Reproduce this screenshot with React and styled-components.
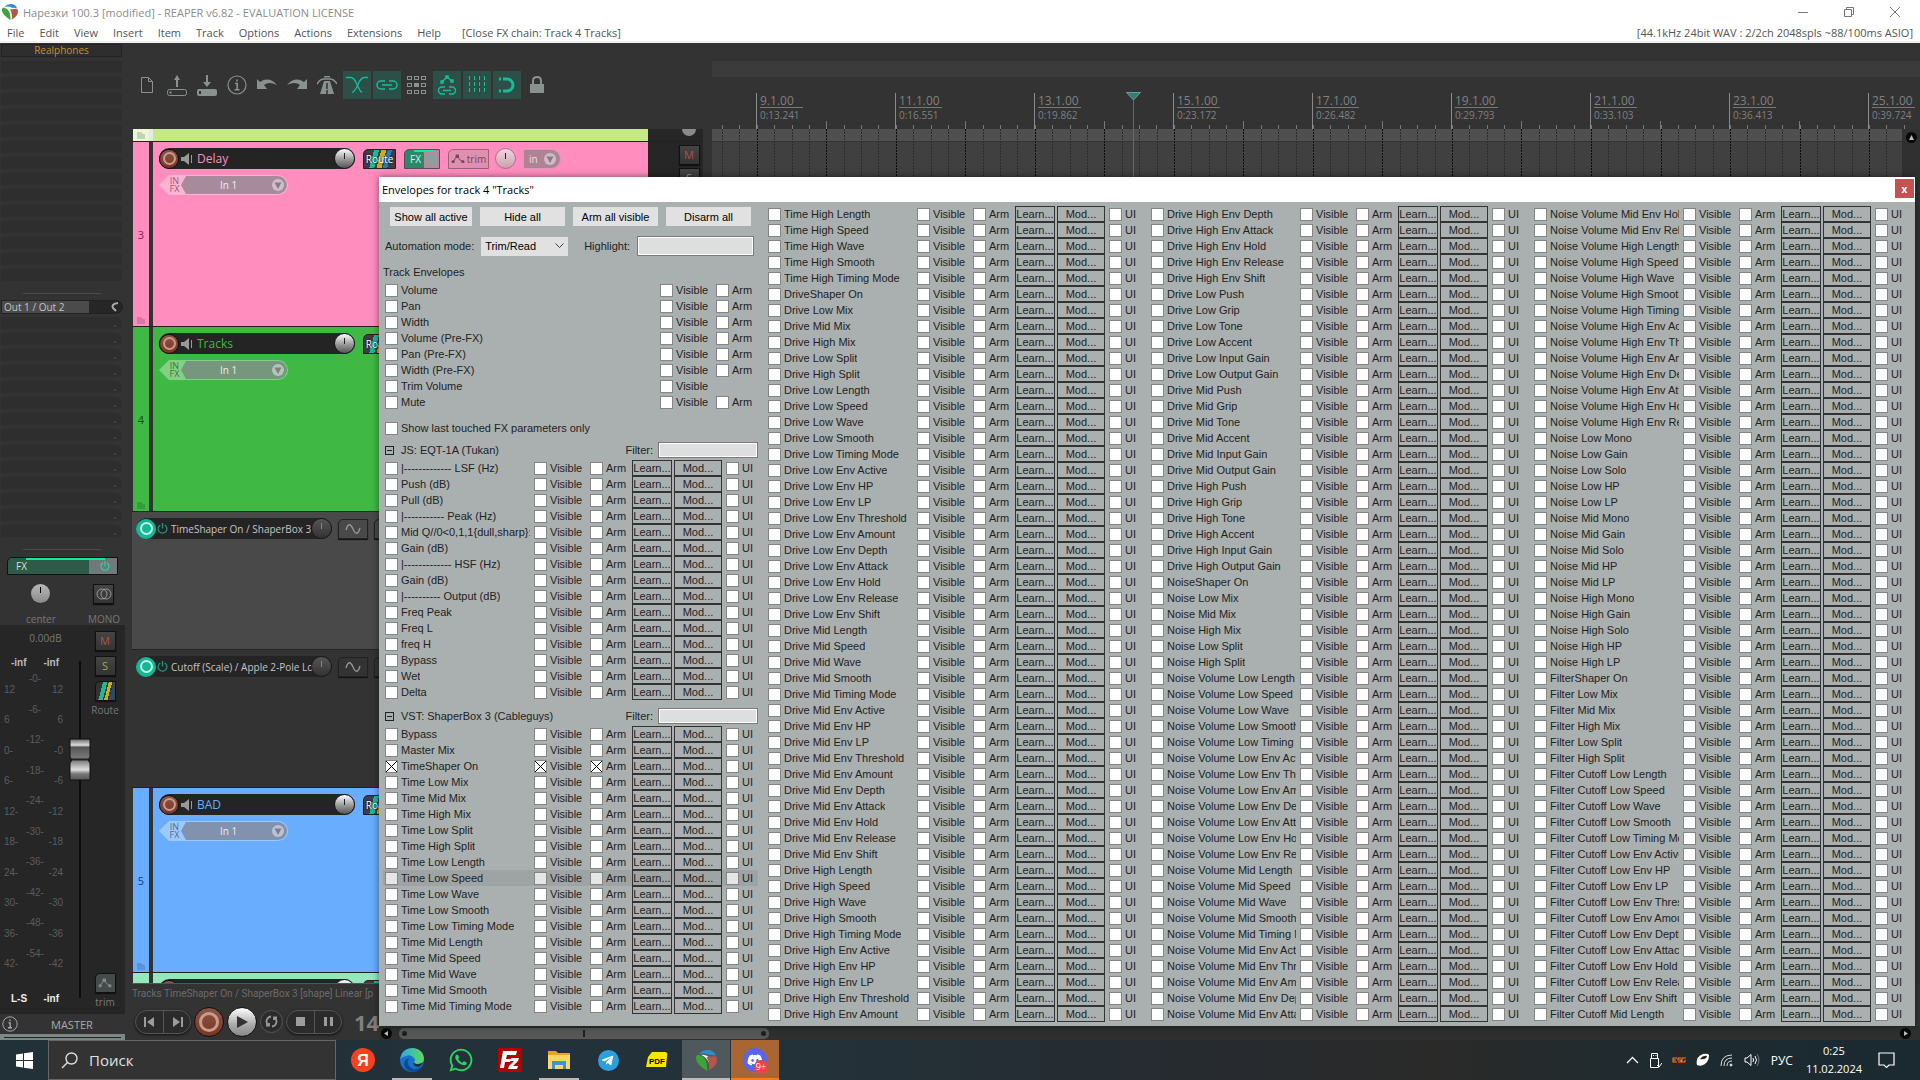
import React from 'react';
import styled, { createGlobalStyle } from 'styled-components';
import { FaWhatsapp, FaDiscord, FaTelegramPlane } from 'react-icons/fa';

const GlobalStyle = createGlobalStyle`
  * { box-sizing: border-box; }
  body {
    margin: 0;
    background: #333;
    font-family: "Open Sans", "Noto Sans", sans-serif;
    font-size: 11px;
    overflow: hidden;
  }
  button, input, select { font: inherit; margin: 0; padding: 0; border: 0; border-radius: 0; }
  h1, h2, p { margin: 0; font: inherit; }
  a { color: inherit; text-decoration: none; }
  svg { display: block; flex: none; }
`;

/* ---------- data ---------- */

const timed = ['Length', 'Speed', 'Wave', 'Smooth', 'Timing Mode'];
const env = ['Env Active', 'Env HP', 'Env LP', 'Env Threshold', 'Env Amount', 'Env Depth', 'Env Attack', 'Env Hold', 'Env Release', 'Env Shift'];
const shortEnv = env.filter((e) => !['Env HP', 'Env LP', 'Env Shift'].includes(e));
const full = [...timed, ...env];
const short = [...timed, ...shortEnv];
const gains = ['Push', 'Grip', 'Tone', 'Accent', 'Input Gain', 'Output Gain'];
const mixes = ['Low Mix', 'Mid Mix', 'High Mix', 'Low Split', 'High Split'];
const noise = ['Mono', 'Gain', 'Solo', 'HP', 'LP'];
const add = (prefix, list) => list.map((item) => `${prefix} ${item}`);

const trackEnvelopes = ['Volume', 'Pan', 'Width', 'Volume (Pre-FX)', 'Pan (Pre-FX)', 'Width (Pre-FX)', 'Trim Volume', 'Mute'];

const eqtParams = [
  '|------------- LSF (Hz)', 'Push (dB)', 'Pull (dB)', '|----------- Peak (Hz)', 'Mid Q//0<0,1,1{dull,sharp}:', 'Gain (dB)',
  '|------------- HSF (Hz)', 'Gain (dB)', '|---------- Output (dB)', 'Freq Peak', 'Freq L', 'freq H', 'Bypass', 'Wet', 'Delta',
];

const shaperParams = [
  'Bypass', 'Master Mix', 'TimeShaper On', ...add('Time', mixes),
  ...add('Time Low', timed), ...add('Time Mid', timed),
];

const restColumns = [
  [
    ...add('Time High', timed), 'DriveShaper On', ...add('Drive', mixes),
    ...add('Drive Low', full), ...add('Drive Mid', full), ...add('Drive High', full.slice(0, 10)),
  ],
  [
    ...add('Drive High', full.slice(10)),
    ...add('Drive Low', gains), ...add('Drive Mid', gains), ...add('Drive High', gains),
    'NoiseShaper On', ...add('Noise', mixes),
    ...add('Noise Volume Low', short), ...add('Noise Volume Mid', short.slice(0, 10)),
  ],
  [
    ...add('Noise Volume Mid', short.slice(10)), ...add('Noise Volume High', short),
    ...add('Noise Low', noise), ...add('Noise Mid', noise), ...add('Noise High', noise),
    'FilterShaper On', ...add('Filter', mixes),
    ...add('Filter Cutoff Low', full), 'Filter Cutoff Mid Length',
  ],
];

const menu = ['File', 'Edit', 'View', 'Insert', 'Item', 'Track', 'Options', 'Actions', 'Extensions', 'Help'];

const bars = [
  ['9.1.00', '0:13.241'], ['11.1.00', '0:16.551'], ['13.1.00', '0:19.862'], ['15.1.00', '0:23.172'], ['17.1.00', '0:26.482'],
  ['19.1.00', '0:29.793'], ['21.1.00', '0:33.103'], ['23.1.00', '0:36.413'], ['25.1.00', '0:39.724'],
];

const outerScale = ['12', '6', '0-', '6-', '12-', '18-', '24-', '30-', '36-', '42-'];
const innerScale = ['-0-', '-6-', '-12-', '-18-', '-24-', '-30-', '-36-', '-42-', '-48-', '-54-'];
const rightScale = ['12', '6', '-0', '-6', '-12', '-18', '-24', '-30', '-36', '-42'];

/* ---------- window frame ---------- */

const Screen = styled.div`
  display: flex;
  flex-direction: column;
  height: 100vh;
  background: #333;
`;

const TitleBar = styled.header`
  display: flex;
  align-items: center;
  justify-content: space-between;
  height: 24px;
  padding: 0 2px;
  background: #fff;
  color: #8c8c8c;
`;

const AppTitle = styled.h1`
  display: flex;
  align-items: center;
  gap: 5px;
  font-size: 11px;
`;

const WindowButtons = styled.div`
  display: flex;
  button {
    display: grid;
    place-items: center;
    width: 46px;
    height: 22px;
    background: none;
  }
`;

const MenuBar = styled.nav`
  display: flex;
  align-items: center;
  gap: 15px;
  height: 19px;
  padding: 0 7px;
  background: #fff;
  border-bottom: 2px solid #f0f0f0;
  color: #555;
  font-size: 11px;
  white-space: nowrap;
`;

const MenuButton = styled.button`
  background: none;
  color: #555;
`;

const CloseFx = styled.button`
  margin-left: 6px;
  background: none;
  color: #555;
`;

const AudioStatus = styled.span`
  margin-left: auto;
`;

const Workspace = styled.main`
  position: relative;
  display: flex;
  flex: 1;
  min-height: 0;
`;

/* ---------- master strip ---------- */

const Master = styled.aside`
  display: flex;
  flex-direction: column;
  flex: none;
  width: 125px;
  background: #333;
  color: #777;
`;

const SlotList = styled.div`
  display: flex;
  flex-direction: column;
  gap: 4px;
  padding: 1px 3px 0 1px;
`;

const FxName = styled.button`
  height: 13px;
  border: 1px solid #222;
  background: #2e2e2e;
  color: #c98b3c;
  font-size: 10px;
  line-height: 11px;
`;

const Slot = styled.div`
  height: 12px;
  background: #2e2e2e;
  border-radius: ${(p) => (p.$send ? '0 6px 6px 0' : '0')};
  ${(p) => p.$send && `
    &::after {
      content: '';
      display: block;
      width: 2px;
      height: 2px;
      margin: 0 6px 0 auto;
      background: #444;
      transform: translateY(8px);
    }
  `}
`;

const Divider = styled.hr`
  width: 78px;
  height: 1px;
  margin: 12px 0 6px 23px;
  border: 0;
  background: #4a4a4a;
  flex: none;
`;

const OutRow = styled.button`
  display: flex;
  align-items: center;
  height: 14px;
  margin: 0 2px 2px 1px;
  border: 1px solid #222;
  border-radius: 0 7px 7px 0;
  background: #262626;
  color: #c4c4c4;
  font-size: 10px;
  line-height: 12px;
  overflow: hidden;
  flex: none;
  span {
    width: 87px;
    padding-left: 2px;
    background: #4b4b4b;
    text-align: left;
  }
  svg { margin-left: 22px; }
`;

const MasterFx = styled.button`
  display: flex;
  align-items: center;
  justify-content: space-between;
  height: 18px;
  margin: 1px 7px 0;
  padding: 0 7px 0 8px;
  border: 1px solid #111;
  border-top-left-radius: 5px;
  background: linear-gradient(#19e69c, #19e69c) 18px 0 / 79px 2px no-repeat, linear-gradient(90deg, #2d5a49 0 81px, #707a7b 81px);
  color: #cfe3da;
  font-size: 10px;
  flex: none;
`;

const PanRow = styled.div`
  display: flex;
  justify-content: space-between;
  height: 50px;
  padding: 9px 5px 0 26px;
  font-size: 10px;
  line-height: 12px;
  flex: none;
`;

const Cell = styled.div`
  display: flex;
  flex-direction: column;
  align-items: center;
  justify-content: space-between;
  gap: 3px;
`;

const SmallKnob = styled.div`
  width: 19px;
  height: 19px;
  border-radius: 50%;
  background: linear-gradient(#000, #000) 9px 3px / 1px 6px no-repeat, linear-gradient(#b8b8b8, #8a8a8a);
`;

const SquareButton = styled.button`
  display: grid;
  place-items: center;
  width: 21px;
  height: 20px;
  border: 1px solid #111;
  border-top-left-radius: ${(p) => (p.$cut ? '5px' : '0')};
  background: ${(p) => p.$bg || 'linear-gradient(#454545, #333)'};
  color: ${(p) => p.$color || '#888'};
  font-size: 11px;
  line-height: 16px;
  box-shadow: 0 1px 1px #111;
  flex: none;
`;

const FaderArea = styled.div`
  display: flex;
  flex: 1;
  min-height: 0;
  background: #262626;
  padding: 6px 7px 6px 4px;
  font-size: 10px;
`;

const Scales = styled.div`
  display: grid;
  grid-template-columns: 20px 22px 17px;
  grid-template-rows: 25px 16px 1fr 16px;
  width: 60px;
  font-family: "Liberation Sans", sans-serif;
  font-size: 10px;
  line-height: 14px;
  color: #5c5c5c;
`;

const Volume = styled.span`
  grid-column: 1 / -1;
  text-align: center;
  padding-left: 24px;
  font-family: "Open Sans", sans-serif;
  color: #777;
`;

const Peaks = styled.span`
  grid-column: 1 / -1;
  display: flex;
  justify-content: space-between;
  padding: 0 4px 0 7px;
  color: ${(p) => (p.$bright ? '#eee' : '#bbb')};
  font-weight: bold;
`;

const ScaleList = styled.ol`
  display: flex;
  flex-direction: column;
  justify-content: space-between;
  list-style: none;
  margin: ${(p) => (p.$inner ? '0 0 31px' : '11px 0 21px')};
  padding: 0;
  text-align: ${(p) => p.$align};
`;

const Fader = styled.div`
  position: relative;
  width: 22px;
  margin: 30px 0 10px 4px;
  background: linear-gradient(#0c0c0c, #0c0c0c) 11px 0 / 2px 100% no-repeat;
  svg { position: absolute; top: 77px; left: 1px; }
`;

const SideButtons = styled.div`
  display: flex;
  flex-direction: column;
  align-items: center;
  gap: 5px;
  width: 26px;
  margin-left: auto;
  line-height: 12px;
  div:last-child { margin-top: auto; }
`;

const MasterName = styled.div`
  display: flex;
  align-items: center;
  gap: 33px;
  height: 20px;
  padding-left: 2px;
  color: #aaa;
  font-size: 11px;
  flex: none;
`;

const MasterColor = styled.div`
  height: 6px;
  border: solid #7d8787;
  border-width: 3px 4px 2px;
  background: #222;
  flex: none;
`;

/* ---------- toolbar and ruler ---------- */

const Project = styled.section`
  display: flex;
  flex-direction: column;
  flex: 1;
  min-width: 0;
  padding-left: 7px;
`;

const TopRow = styled.div`
  display: flex;
  height: 86px;
  flex: none;
`;

const Toolbar = styled.div`
  display: flex;
  gap: 2px;
  flex: 0 0 580px;
  padding: 28px 0 0 1px;
`;

const ToolButton = styled.button`
  display: grid;
  place-items: center;
  width: 28px;
  height: 28px;
  background: ${(p) => (p.$on ? '#2c4f48' : 'none')};
  color: ${(p) => (p.$on ? '#1abc98' : '#8a918f')};
`;

const Timeline = styled.div`
  flex: 1;
  min-width: 0;
  overflow: hidden;
  padding-top: 18px;
`;

const RegionBar = styled.div`
  height: 16px;
  margin-bottom: 16px;
  background: #3b3b3b;
`;

const Ruler = styled.div`
  display: flex;
  height: 36px;
  padding-left: 44px;
  background: repeating-linear-gradient(90deg, #777 0 1px, transparent 1px 17.38px) 10px 100% / 100% 4px no-repeat;
`;

const Bar = styled.div`
  flex: 0 0 139px;
  padding-left: 3px;
  border-left: 1px solid #8a8a8a;
  background: linear-gradient(#777, #777) 69px 100% / 1px 8px no-repeat;
  color: #808080;
  span {
    display: block;
    width: 43px;
    height: 15px;
    border-bottom: 1px solid #777;
    font-size: 12px;
    line-height: 15px;
  }
  small { display: block; font-size: 10px; line-height: 14px; }
`;

/* ---------- tracks ---------- */

const Body = styled.div`
  display: flex;
  flex: 1;
  min-height: 0;
`;

const Tracks = styled.div`
  flex: 0 0 571px;
  display: flex;
  flex-direction: column;
  min-height: 0;
  overflow: hidden;
  background: #262626;
  border-bottom: 1px solid #555;
`;

const Track = styled.div`
  display: flex;
  flex: none;
  height: ${(p) => p.$height}px;
  border-bottom: 1px solid #222;
`;

const Number = styled.div`
  position: relative;
  display: grid;
  place-items: center;
  width: 17px;
  border-left: 1px solid #333;
  background: ${(p) => p.$bg};
  color: ${(p) => p.$ink};
  svg { position: absolute; bottom: 2px; left: 4px; opacity: 0.15; color: #000; }
`;

const TrackBody = styled.div`
  width: 499px;
  padding: 6px 0 0 6px;
  border-left: 4px solid ${(p) => p.$edge || '#333'};
  background: ${(p) => p.$bg};
  overflow: hidden;
`;

const TrackRow = styled.div`
  display: flex;
  align-items: center;
  gap: 8px;
  margin-bottom: 6px;
`;

const NamePlate = styled.div`
  display: flex;
  align-items: center;
  gap: ${(p) => (p.$lane ? 1 : 2)}px;
  width: 196px;
  height: 21px;
  border-radius: 11px;
  background: #242424;
  color: ${(p) => p.$color};
  font-size: ${(p) => (p.$lane ? 10 : 12)}px;
  white-space: nowrap;
  flex: none;
  span {
    flex: 1;
    width: 0;
    overflow: hidden;
    padding-left: 2px;
    margin-right: ${(p) => (p.$lane ? -3 : 0)}px;
  }
`;

const Ring = styled.button`
  display: grid;
  place-items: center;
  width: ${(p) => p.$size || 20}px;
  height: ${(p) => p.$size || 20}px;
  border: 1px solid ${(p) => (p.$on ? '#12b893' : '#111')};
  border-radius: 50%;
  background: ${(p) => (p.$on ? '#16b795' : 'linear-gradient(#8b5646, #7c3424)')};
  flex: none;
  &::after {
    content: '';
    width: 50%;
    height: 50%;
    border: ${(p) => (p.$size ? 3 : 2)}px solid ${(p) => (p.$on ? '#bff5e8' : '#c79b8e')};
    border-radius: 50%;
  }
`;

const Knob = styled.div`
  width: 21px;
  height: 21px;
  border-radius: 50%;
  border: 1px solid #1a1a1a;
  background: linear-gradient(${(p) => p.$mark || '#222'}, ${(p) => p.$mark || '#222'}) 9px 4px / 1px 6px no-repeat,
    ${(p) => p.$bg || 'linear-gradient(#fff, #999 55%, #555)'};
  flex: none;
`;

const RouteButton = styled.button`
  width: 33px;
  height: 20px;
  border: 1px solid #222;
  border-top-left-radius: 5px;
  background: linear-gradient(105deg, #443a41 0 28%, #1abc98 28% 42%, #443a41 42% 48%, #c9b019 48% 62%, #443a41 62% 66%, #1e7fc0 66% 78%, #443a41 78%);
  color: #fff;
  font-size: 10px;
  text-shadow: 0 0 2px #000;
  flex: none;
`;

const FxButton = styled.button`
  display: flex;
  align-items: center;
  justify-content: space-between;
  width: 36px;
  height: 20px;
  padding: 0 3px 0 5px;
  border: 1px solid #5e4854;
  border-top-left-radius: 5px;
  background: linear-gradient(#13e99b, #13e99b) 9px 0 / 20px 2px no-repeat, linear-gradient(90deg, #2a8a68 0 19px, #b68a9d 19px);
  color: #d8f0e6;
  font-size: 10px;
`;

const TrimButton = styled.button`
  display: flex;
  align-items: center;
  justify-content: center;
  gap: 2px;
  width: 41px;
  height: 20px;
  border: 1px solid #9c6179;
  border-top-left-radius: 5px;
  background: #e18fb0;
  color: #764659;
  font-size: 10px;
`;

const PaleKnob = styled(Knob)`
  margin-left: -2px;
  border-color: #a87088;
`;

const InputMode = styled.button`
  display: flex;
  align-items: center;
  justify-content: space-between;
  width: 38px;
  height: 20px;
  margin-left: -1px;
  padding: 0 3px 0 5px;
  border: 1px solid #d39db2;
  border-radius: 0 10px 10px 0;
  background: #ae8395;
  color: #f3dbe4;
  font-size: 10px;
`;

const InputRow = styled.div`
  display: flex;
  align-items: center;
  width: 129px;
  height: 20px;
  background: rgba(255, 255, 255, 0.35);
  border-radius: 10px;
  clip-path: polygon(0 50%, 10px 0, 100% 0, 100% 100%, 10px 100%);
`;

const InFx = styled.button`
  width: 22px;
  padding-left: 9px;
  background: none;
  color: rgba(0, 0, 0, 0.5);
  font-size: 9px;
  line-height: 8px;
`;

const InputSelect = styled.button`
  display: flex;
  align-items: center;
  justify-content: space-between;
  flex: 1;
  height: 18px;
  margin-right: 1px;
  padding: 0 2px 0 39px;
  border-radius: 0 9px 9px 0;
  background: rgba(110, 110, 120, 0.6);
  color: #eee;
  font-size: 10px;
  clip-path: polygon(0 50%, 5px 0, 100% 0, 100% 100%, 5px 100%);
`;

const Lane = styled.div`
  height: ${(p) => p.$height}px;
  padding: 6px 0 0 4px;
  border-bottom: 1px solid #222;
  background: ${(p) => p.$bg};
  flex: none;
`;

const ShapeButton = styled(SquareButton)`
  width: 30px;
  background: ${(p) => p.$bg};
  border-color: #222;
  margin-left: -2px;
`;

const MuteColumn = styled.div`
  display: flex;
  flex-direction: column;
  align-items: center;
  gap: 3px;
  width: 54px;
  padding: ${(p) => (p.$first ? 0 : 3)}px 0 0 28px;
`;

const FolderButton = styled.div`
  width: 14px;
  height: 7px;
  border-radius: 0 0 7px 7px;
  background: #8a8a8a;
`;

const Arrange = styled.div`
  position: relative;
  flex: 1;
  min-width: 0;
  margin-left: 9px;
  overflow: hidden;
  background: linear-gradient(#4f4f4f 0 12px, #333 12px 13px, #404040 13px);
`;

const Playhead = styled.div`
  position: absolute;
  left: 1126px;
  top: 49px;
  display: flex;
  flex-direction: column;
  align-items: center;
  &::after {
    content: '';
    width: 1px;
    height: 77px;
    background: #2a8577;
  }
`;

const VScroll = styled.div`
  display: flex;
  justify-content: center;
  width: 18px;
  padding-top: 3px;
  background: #303030;
`;

const RoundArrow = styled.button`
  display: grid;
  place-items: center;
  width: 11px;
  height: 11px;
  border-radius: 50%;
  background: #080808;
  color: #bbb;
`;

/* ---------- transport ---------- */

const Bottom = styled.div`
  display: flex;
  align-items: flex-end;
  flex: none;
  height: 56px;
`;

const Dock = styled.div`
  width: 247px;
  height: 56px;
  overflow: hidden;
  padding-top: 2px;
`;

const Hint = styled.p`
  width: 247px;
  overflow: hidden;
  color: #6b6b6b;
  font-family: Roboto, sans-serif;
  font-size: 10px;
  line-height: 15px;
  white-space: nowrap;
`;

const Transport = styled.div`
  display: flex;
  align-items: center;
  gap: 3px;
  height: 38px;
  padding: 3px 0 0 3px;
`;

const Pill = styled.div`
  display: flex;
  border: 1px solid #555;
  border-radius: 12px;
  background: #2b2b2b;
  box-shadow: 0 1px 3px #111;
  button {
    display: grid;
    place-items: center;
    width: 27px;
    height: 22px;
    background: none;
    color: #9c9c9c;
  }
  button + button { border-left: 1px solid #555; }
`;

const PlayButton = styled.button`
  display: grid;
  place-items: center;
  width: ${(p) => p.$size}px;
  height: ${(p) => p.$size}px;
  border: 1px solid ${(p) => (p.$dark ? '#555' : '#111')};
  border-radius: 50%;
  background: ${(p) => (p.$dark ? '#2b2b2b' : 'linear-gradient(#fff, #aaa 60%, #888)')};
  color: ${(p) => (p.$dark ? '#999' : '#333')};
  flex: none;
`;

const Clock = styled.strong`
  margin-left: 9px;
  color: #808080;
  font-size: 22px;
  line-height: 24px;
`;

const HScroll = styled.div`
  display: flex;
  align-items: center;
  flex: 1;
  height: 14px;
  padding: 0 9px 0 2px;
  background: #2f2f2f;
`;

const HThumb = styled.div`
  display: flex;
  align-items: center;
  justify-content: space-between;
  width: 370px;
  height: 11px;
  margin: 0 auto 0 7px;
  padding: 0 3px;
  border-radius: 5px;
  background: #575757;
  i { width: 5px; height: 5px; border-radius: 50%; background: #1e1e1e; }
  b { width: 2px; height: 7px; background: #1e1e1e; }
`;

/* ---------- envelope dialog ---------- */

const Dialog = styled.div`
  position: absolute;
  z-index: 2;
  top: 134px;
  left: 379px;
  right: 5px;
  background: #aab0b0;
  color: #222;
  font-family: "Liberation Sans", sans-serif;
  font-size: 11px;
  line-height: 16px;
  box-shadow: 0 0 7px rgba(0, 0, 0, 0.5);
`;

const DialogTitle = styled.header`
  display: flex;
  align-items: center;
  justify-content: space-between;
  height: 25px;
  padding: 0 1px 0 3px;
  background: #fff;
  color: #000;
  font-family: "Open Sans", sans-serif;
  h2 { font-size: 11px; }
`;

const DialogClose = styled.button`
  width: 19px;
  height: 19px;
  margin-bottom: 2px;
  background: #c75050;
  color: #fff;
  font-size: 10px;
  font-weight: bold;
  line-height: 16px;
`;

const DialogBody = styled.div`
  display: grid;
  grid-template-columns: repeat(4, minmax(0, 1fr));
  column-gap: 8px;
  padding: 4px 8px 4px 4px;
`;

const ActionRow = styled.div`
  display: grid;
  grid-template-columns: 82px repeat(3, 85px);
  gap: 8px;
  padding: 1px 0 0 7px;
`;

const ActionButton = styled.button`
  height: 19px;
  background: #e1e1e1;
  color: #000;
`;

const SelectBox = styled.div`
  display: flex;
  align-items: center;
  margin: 0 20px 0 auto;
  svg { margin-left: -13px; pointer-events: none; }
`;

const ModeRow = styled.div`
  display: flex;
  align-items: center;
  margin: 10px 4px 8px 2px;
  select {
    appearance: none;
    width: 87px;
    height: 19px;
    padding-left: 4px;
    background: #e1e1e1;
    color: #000;
  }
  input {
    width: 117px;
    height: 20px;
    margin-left: 7px;
    border: 1px solid #7a7a7a;
    outline: 1px solid #fff;
    outline-offset: -2px;
    background: #dcdfde;
  }
`;

const SectionTitle = styled.h2`
  height: 18px;
`;

const EnvRow = styled.div`
  display: grid;
  grid-template-columns: ${(p) => (p.$track ? '275px 56px 42px' : '149px 56px 42px 40px 50px 1fr')};
  height: 16px;
  padding-left: 2px;
  background: ${(p) => (p.$active ? '#9ea4a4' : 'none')};
`;

const Check = styled.label`
  display: flex;
  align-items: center;
  gap: 3px;
  overflow: hidden;
  padding-right: ${(p) => (p.$name ? 4 : 0)}px;
  margin-left: ${(p) => (p.$ui ? 4 : 0)}px;
  white-space: pre;
  input {
    appearance: none;
    width: 13px;
    height: 13px;
    border: 1px solid #858585;
    background: ${(p) => (p.$active ? '#e6e6e6' : '#fff')};
    flex: none;
  }
  input:checked {
    background:
      linear-gradient(45deg, transparent 47%, #000 47% 53%, transparent 53%),
      linear-gradient(-45deg, transparent 47%, #000 47% 53%, transparent 53%), #fff;
  }
  span { overflow: hidden; }
`;

const FlatButton = styled.button`
  height: 16px;
  margin-left: ${(p) => (p.$gap ? 2 : 0)}px;
  border: 1px solid #333;
  background: none;
  color: #222;
  line-height: 14px;
`;

const LastTouched = styled.div`
  height: 16px;
  margin-top: 10px;
  padding-left: 2px;
`;

const FxHeader = styled.div`
  display: flex;
  align-items: center;
  height: 16px;
  margin: ${(p) => p.$top}px 0 2px;
  padding-left: 2px;
  label { display: flex; align-items: center; gap: 5px; margin-left: auto; }
  input {
    width: 100px;
    height: 16px;
    border: 1px solid #7a7a7a;
    outline: 1px solid #fff;
    outline-offset: -2px;
    background: #dcdfde;
  }
`;

const Collapse = styled.button`
  width: 9px;
  height: 9px;
  margin-right: 7px;
  border: 1px solid #222;
  background: linear-gradient(#222, #222) 1px 3px / 5px 1px no-repeat;
`;

/* ---------- taskbar ---------- */

const Taskbar = styled.footer`
  display: flex;
  height: 40px;
  background: linear-gradient(90deg, #223038 0, #23323a 40%, #262b30 62%, #2a2a29 75%, #1d2b31 88%, #1b2a30);
  color: #fff;
  flex: none;
`;

const StartButton = styled.button`
  display: grid;
  place-items: center;
  width: 48px;
  background: none;
`;

const Search = styled.label`
  display: flex;
  align-items: center;
  gap: 11px;
  width: 288px;
  margin-right: 3px;
  padding-left: 12px;
  border: 1px solid #666;
  background: #333;
  input {
    width: 200px;
    background: none;
    color: #e0e0e0;
    font-size: 15px;
    outline: none;
  }
  input::placeholder { color: #e0e0e0; opacity: 1; }
`;

const AppButton = styled.button`
  position: relative;
  display: grid;
  place-items: center;
  width: 48px;
  margin-right: 1px;
  background: ${(p) => p.$bg || 'none'};
  box-shadow: ${(p) => (p.$line ? `inset 0 -2px ${p.$line}` : 'none')};
  color: #fff;
  border: solid transparent;
  border-width: 0 ${(p) => (p.$bg ? 0 : 4)}px;
`;

const Badge = styled.span`
  position: absolute;
  right: 11px;
  bottom: 6px;
  width: 14px;
  height: 14px;
  border-radius: 50%;
  background: #ed4245;
  font-size: 9px;
  line-height: 13px;
`;

const Tray = styled.div`
  display: flex;
  align-items: center;
  gap: 10px;
  margin-left: auto;
  padding-right: 25px;
  font-size: 12px;
`;

const DateTime = styled.div`
  margin: 0 6px 0 3px;
  text-align: center;
  font-size: 11px;
  line-height: 18px;
`;

/* ---------- icons ---------- */

const ReaperLogo = ({ size }) => (
  <svg width={size} height={size} viewBox="0 0 20 20">
    <path d="M3 3.500Q6 0 11 0q6 0 8 5.500-3-1-6-.5Q9 2.500 3 3.500z" fill="#2f8fc4" />
    <path d="M2 4.500q5 1 7 5 2 4 1.500 10.500Q-1 13 0 6.500q.5-1.500 2-2z" fill="#3da435" />
    <path d="M5 4.500q5-.5 7.500 2.500 1.500 3 1 9Q12 8 5 4.500z" fill="#fff" />
    <path d="M13 6.500q4-1 6.500 0Q22 14 12 19.500q1.500-8-2-12.500z" fill="#b3574a" />
  </svg>
);

const Power = ({ color = '#2dd3a2', size = 10 }) => (
  <svg width={size} height={size} viewBox="0 0 10 10" fill="none" stroke={color} strokeWidth="1.2">
    <path d="M3 1.8a4 4 0 1 0 4 0M5 0v5" />
  </svg>
);

const Speaker = () => (
  <svg width="12" height="12" viewBox="0 0 12 12" fill="#999">
    <path d="M0 4h3l5-4v12L3 8H0zM10 2h1v8h-1z" />
  </svg>
);

const Folder = () => (
  <svg width="8" height="7" viewBox="0 0 8 7" fill="currentColor"><path d="M0 0h4l2 2h2v5H0z" /></svg>
);

const DropCircle = () => (
  <svg width="14" height="14" viewBox="0 0 14 14">
    <circle cx="7" cy="7" r="6" fill="rgba(255,255,255,.45)" />
    <path d="M3.5 4.5h7L7 11z" fill="rgba(90,80,90,.6)" />
  </svg>
);

const Nodes = ({ size = 14 }) => (
  <svg width={size} height={size * 0.7} viewBox="0 0 14 10" fill="currentColor" stroke="currentColor">
    <path d="M2 8l4-6 3 4 3 2" fill="none" />
    <path d="M1 7h2v2H1zM5 1h2.500v2.500H5zM11 7h2v2h-2z" />
  </svg>
);

const Sine = () => (
  <svg width="16" height="12" viewBox="0 0 16 12" fill="none" stroke="#999" strokeWidth="1.300">
    <path d="M1 7q3-10 7-1t7-1" />
  </svg>
);

const InfoIcon = ({ size = 20 }) => (
  <svg width={size} height={size} viewBox="0 0 20 20" fill="none" stroke="currentColor" strokeWidth="1.200">
    <circle cx="10" cy="10" r="9" />
    <path d="M10 4.500v2M8 8.500h2.200v6M7.500 14.700h5" strokeWidth="1.600" />
  </svg>
);

const tools = [
  ['New project', false, <svg width="14" height="18" viewBox="0 0 14 18" fill="none" stroke="currentColor"><path d="M1.500 1.500h7l4 4v11h-11zM8.500 1.500v4h4" /></svg>],
  ['Open project', false, <svg width="22" height="22" viewBox="0 0 22 22" fill="none" stroke="currentColor"><rect x="1.500" y="15.500" width="19" height="6" rx="2" /><path d="M11 13V5M4.500 17.500v2" strokeWidth="2" /><path d="M11 1l3 5H8z" fill="currentColor" stroke="none" /></svg>],
  ['Save project', false, <svg width="22" height="22" viewBox="0 0 22 22" fill="currentColor"><rect x="1" y="15" width="20" height="7" rx="2" /><path d="M10 1h2v7h3l-4 5-4-5h3z" /><path d="M3 17h2v3H3z" fill="#333" /></svg>],
  ['Project settings', false, <InfoIcon />],
  ['Undo', false, <svg width="22" height="12" viewBox="0 0 22 12" fill="currentColor"><path d="M1 0l3 3q9-6 17 3-8-4-13 0l3 4H1z" /></svg>],
  ['Redo', false, <svg width="22" height="12" viewBox="0 0 22 12" fill="currentColor"><path d="M21 0l-3 3Q9-3 1 6q8-4 13 0l-3 4h10z" /></svg>],
  ['Metronome', false, <svg width="20" height="20" viewBox="0 0 20 20"><path d="M0 9Q3 4 7 4h6q4 0 7 5" fill="none" stroke="currentColor" strokeWidth="1.500" /><path d="M7 1h6v1.500H7zM7 6h6l4 13H3z" fill="currentColor" /><path d="M10 8v6M10 15v4" stroke="#333" strokeWidth="1.500" /></svg>],
  ['Auto-crossfade', true, <svg width="24" height="18" viewBox="0 0 24 18" fill="none" stroke="currentColor" strokeWidth="1.300"><path d="M1 1.500h5q3 0 6 7t5 8M23 1.500h-4q-3 0-6 7t-6 8" /></svg>],
  ['Item grouping', true, <svg width="24" height="12" viewBox="0 0 24 12" fill="none" stroke="currentColor" strokeWidth="1.500"><path d="M10 2H6a4 4 0 0 0 0 8h4M14 2h4a4 4 0 0 1 0 8h-4M7 6h10" /></svg>],
  ['Ripple editing', false, <svg width="20" height="18" viewBox="0 0 20 18" fill="none" stroke="currentColor">{[0, 7, 14].map((y) => [0, 7, 14].map((x) => <rect key={`${x}-${y}`} x={x + 0.5} y={y + 0.5} width="4" height="3" fill={x === 7 && y === 7 ? 'currentColor' : 'none'} />))}</svg>],
  ['Envelope items', true, <svg width="20" height="22" viewBox="0 0 20 22" fill="none" stroke="currentColor" strokeWidth="1.400"><path d="M5 8l5-5 5 4" /><path d="M4 7h2v2H4zM9 2h2v2H9zM14 6h2v2h-2z" fill="currentColor" /><path d="M8 13H5a3.500 3.500 0 0 0 0 7h3M12 13h3a3.500 3.500 0 0 1 0 7h-3M6 16.500h8" /></svg>],
  ['Grid lines', true, <svg width="18" height="18" viewBox="0 0 18 18" stroke="currentColor" strokeDasharray="4 2"><path d="M1.500 0v18M6.500 0v18M11.500 0v18M16.500 0v18" /></svg>],
  ['Snap', true, <svg width="18" height="18" viewBox="0 0 18 18" fill="none" stroke="currentColor" strokeWidth="3"><path d="M5 3h4a6 6 0 0 1 0 12H5" /><path d="M1 3h2M1 15h2" /></svg>],
  ['Locking', false, <svg width="14" height="18" viewBox="0 0 14 18"><path d="M3 8V5q0-4 4-4t4 4v3" fill="none" stroke="currentColor" strokeWidth="2" /><path d="M0 8h14v9H0z" fill="currentColor" /></svg>],
];

/* ---------- pieces ---------- */

function TrackPanel({ number, name, color, ink, height, faded }) {
  return (
    <Track $height={height}>
      <Number $bg={color} $ink={ink}>{number}<Folder /></Number>
      <TrackBody $bg={color}>
        <TrackRow>
          <NamePlate $color={color}>
            <Ring aria-label="Record arm" />
            <Speaker />
            <span>{name}</span>
            <Knob />
          </NamePlate>
          <RouteButton>Route</RouteButton>
          {faded && (
            <>
              <FxButton>FX<Power /></FxButton>
              <TrimButton><Nodes />trim</TrimButton>
              <PaleKnob $bg="linear-gradient(#f0d5df, #c9a0b0)" />
              <InputMode>in<DropCircle /></InputMode>
            </>
          )}
        </TrackRow>
        <InputRow>
          <InFx>IN FX</InFx>
          <InputSelect>In 1<DropCircle /></InputSelect>
        </InputRow>
      </TrackBody>
      {faded && (
        <MuteColumn>
          <SquareButton $color="#b05048">M</SquareButton>
          <SquareButton $color="#a6a64a">S</SquareButton>
        </MuteColumn>
      )}
    </Track>
  );
}

function EnvelopeLane({ name, height, bg }) {
  return (
    <Lane $height={height} $bg={bg}>
      <TrackRow>
        <NamePlate $color="#c4c4c4" $lane>
          <Ring $on aria-label="Arm envelope" />
          <Power color="#2b9180" size={11} />
          <span>{name}</span>
          <Knob $mark="#1abc98" $bg="linear-gradient(#555, #333)" />
        </NamePlate>
        <ShapeButton $bg={bg} $cut aria-label="Modulation"><Sine /></ShapeButton>
        <ShapeButton $bg={bg} $cut aria-label="Envelope" />
      </TrackRow>
    </Lane>
  );
}

function Param({ name }) {
  const on = name === 'TimeShaper On';
  const active = name === 'Time Low Speed';
  return (
    <EnvRow $active={active}>
      <Check $name $active={active}><input type="checkbox" defaultChecked={on} /><span>{name}</span></Check>
      <Check $active={active}><input type="checkbox" defaultChecked={on} />Visible</Check>
      <Check $active={active}><input type="checkbox" defaultChecked={on} />Arm</Check>
      <FlatButton>Learn...</FlatButton>
      <FlatButton $gap>Mod...</FlatButton>
      <Check $ui $active={active}><input type="checkbox" />UI</Check>
    </EnvRow>
  );
}

function FxSection({ title, params, top }) {
  return (
    <>
      <FxHeader $top={top}>
        <Collapse aria-label="Collapse" />
        {title}
        <label>Filter:<input type="text" /></label>
      </FxHeader>
      {params.map((name, i) => <Param key={i} name={name} />)}
    </>
  );
}

function EnvelopeDialog() {
  return (
    <Dialog role="dialog">
      <DialogTitle>
        <h2>Envelopes for track 4 "Tracks"</h2>
        <DialogClose>x</DialogClose>
      </DialogTitle>
      <DialogBody>
        <div>
          <ActionRow>
            <ActionButton>Show all active</ActionButton>
            <ActionButton>Hide all</ActionButton>
            <ActionButton>Arm all visible</ActionButton>
            <ActionButton>Disarm all</ActionButton>
          </ActionRow>
          <ModeRow>
            <label htmlFor="mode">Automation mode:</label>
            <SelectBox>
              <select id="mode" defaultValue="Trim/Read"><option>Trim/Read</option></select>
              <svg width="9" height="6" viewBox="0 0 9 6" fill="none" stroke="#444"><path d="M.5.5l4 4 4-4" /></svg>
            </SelectBox>
            <label htmlFor="highlight">Highlight:</label>
            <input id="highlight" type="text" />
          </ModeRow>
          <SectionTitle>Track Envelopes</SectionTitle>
          {trackEnvelopes.map((name) => (
            <EnvRow key={name} $track>
              <Check><input type="checkbox" />{name}</Check>
              <Check><input type="checkbox" />Visible</Check>
              {name !== 'Trim Volume' && <Check><input type="checkbox" />Arm</Check>}
            </EnvRow>
          ))}
          <LastTouched>
            <Check><input type="checkbox" />Show last touched FX parameters only</Check>
          </LastTouched>
          <FxSection title="JS: EQT-1A (Tukan)" params={eqtParams} top={6} />
          <FxSection title="VST: ShaperBox 3 (Cableguys)" params={shaperParams} top={8} />
        </div>
        {restColumns.map((list, i) => (
          <div key={i}>{list.map((name) => <Param key={name} name={name} />)}</div>
        ))}
      </DialogBody>
    </Dialog>
  );
}

function MasterStrip() {
  return (
    <Master>
      <SlotList>
        <FxName>Realphones</FxName>
        {Array.from({ length: 14 }, (_, i) => <Slot key={i} />)}
      </SlotList>
      <Divider />
      <OutRow>
        <span>Out 1 / Out 2</span>
        <svg width="8" height="10" viewBox="0 0 8 10" fill="none" stroke="#aaa" strokeWidth="2"><path d="M7 1Q0 2 2 6l3 3" /></svg>
      </OutRow>
      <SlotList>
        {Array.from({ length: 14 }, (_, i) => <Slot key={i} $send />)}
      </SlotList>
      <Divider />
      <MasterFx>FX<Power /></MasterFx>
      <PanRow>
        <Cell><SmallKnob /><span>center</span></Cell>
        <Cell>
          <SquareButton aria-label="Mono">
            <svg width="16" height="12" viewBox="0 0 16 12" fill="none" stroke="#999"><circle cx="6" cy="6" r="5" /><circle cx="10" cy="6" r="5" /></svg>
          </SquareButton>
          <span>MONO</span>
        </Cell>
      </PanRow>
      <FaderArea>
        <Scales>
          <Volume>0.00dB</Volume>
          <Peaks><b>-inf</b><b>-inf</b></Peaks>
          <ScaleList $align="left">{outerScale.map((s, i) => <li key={i}>{s}</li>)}</ScaleList>
          <ScaleList $align="center" $inner>{innerScale.map((s) => <li key={s}>{s}</li>)}</ScaleList>
          <ScaleList $align="right">{rightScale.map((s, i) => <li key={i}>{s}</li>)}</ScaleList>
          <Peaks $bright><b>L-S</b><b>-inf</b></Peaks>
        </Scales>
        <Fader>
          <svg width="22" height="44" viewBox="0 0 22 44">
            <defs>
              <linearGradient id="cap" x2="0" y2="1">
                <stop offset="0" stopColor="#666" /><stop offset=".15" stopColor="#ddd" /><stop offset=".2" stopColor="#555" />
                <stop offset=".45" stopColor="#777" /><stop offset=".5" stopColor="#222" /><stop offset=".55" stopColor="#888" />
                <stop offset=".75" stopColor="#e0e0e0" /><stop offset=".85" stopColor="#777" /><stop offset="1" stopColor="#555" />
              </linearGradient>
            </defs>
            <path d="M1 1h20v18l-2 3 2 3v17H1V25l2-3-2-3z" fill="url(#cap)" stroke="#111" />
          </svg>
        </Fader>
        <SideButtons>
          <SquareButton $color="#b05048">M</SquareButton>
          <SquareButton $color="#a6a64a">S</SquareButton>
          <Cell>
            <SquareButton $cut aria-label="Routing" $bg="linear-gradient(105deg, #333 30%, #1abc98 30% 48%, #333 48% 54%, #c9b019 54% 68%, #333 68% 74%, #2c4a60 74%)" />
            <span>Route</span>
          </Cell>
          <Cell>
            <SquareButton $cut $bg="#454a4b" aria-label="Automation"><Nodes /></SquareButton>
            <span>trim</span>
          </Cell>
        </SideButtons>
      </FaderArea>
      <MasterName><InfoIcon size={16} />MASTER</MasterName>
      <MasterColor />
    </Master>
  );
}

function GridLines() {
  return (
    <svg width="1190" height="48" viewBox="0 0 1190 48">
      {Array.from({ length: 68 }, (_, i) => {
        const x = Math.round(10 + i * 17.38) + 0.5;
        return <path key={i} d={`M${x} 0v48`} stroke={i % 4 === 2 ? '#0c0c0c' : '#2c2c2c'} strokeDasharray="2 1" />;
      })}
    </svg>
  );
}

export default function App() {
  return (
    <>
      <GlobalStyle />
      <Screen>
        <TitleBar>
          <AppTitle><ReaperLogo size={16} />Нарезки 100.3 [modified] - REAPER v6.82 - EVALUATION LICENSE</AppTitle>
          <WindowButtons>
            <button aria-label="Minimize"><svg width="10" height="10" stroke="#777"><path d="M0 5.500h10" /></svg></button>
            <button aria-label="Restore"><svg width="10" height="10" fill="none" stroke="#777"><path d="M.5 2.500h7v7h-7zM2.500 2V.5h7v7H8" /></svg></button>
            <button aria-label="Close"><svg width="10" height="10" stroke="#777"><path d="M0 0l10 10M10 0L0 10" /></svg></button>
          </WindowButtons>
        </TitleBar>
        <MenuBar>
          {menu.map((m) => <MenuButton key={m}>{m}</MenuButton>)}
          <CloseFx>[Close FX chain: Track 4 Tracks]</CloseFx>
          <AudioStatus>[44.1kHz 24bit WAV : 2/2ch 2048spls ~88/100ms ASIO]</AudioStatus>
        </MenuBar>

        <Workspace>
          <MasterStrip />
          <Project>
            <TopRow>
              <Toolbar>
                {tools.map(([label, on, icon]) => <ToolButton key={label} aria-label={label} $on={on}>{icon}</ToolButton>)}
              </Toolbar>
              <Timeline>
                <RegionBar />
                <Ruler>
                  {bars.map(([bar, time]) => <Bar key={bar}><span>{bar}</span><small>{time}</small></Bar>)}
                </Ruler>
              </Timeline>
            </TopRow>
            <Body>
              <Tracks>
                <Track $height={13}>
                  <Number $bg="#edf6d4"><Folder /></Number>
                  <TrackBody $bg="#c6e986" $edge="#e8e8e8" />
                  <MuteColumn $first><FolderButton /></MuteColumn>
                </Track>
                <TrackPanel number="3" name="Delay" color="#ff8dbe" ink="#8c1f4d" height={185} faded />
                <TrackPanel number="4" name="Tracks" color="#3fb944" ink="#0d4a10" height={185} />
                <EnvelopeLane name="TimeShaper On / ShaperBox 3" height={138} bg="#494949" />
                <EnvelopeLane name="Cutoff (Scale) / Apple 2-Pole Low" height={138} bg="#333" />
                <TrackPanel number="5" name="BAD" color="#68adff" ink="#123f8c" height={185} />
                <TrackPanel number="" name="" color="#94e8bb" ink="#222" height={60} />
              </Tracks>
              <Arrange><GridLines /></Arrange>
              <VScroll><RoundArrow aria-label="Scroll up"><svg width="5" height="5" fill="currentColor"><path d="M2.500 0L5 5H0z" /></svg></RoundArrow></VScroll>
            </Body>
            <Bottom>
              <Dock>
                <Hint>Tracks TimeShaper On / ShaperBox 3 [shape] Linear [p</Hint>
                <Transport>
                  <Pill>
                    <button aria-label="Go to start"><svg width="11" height="10" fill="currentColor"><path d="M0 0h2v10H0zM10 0v10L3 5z" /></svg></button>
                    <button aria-label="Go to end"><svg width="11" height="10" fill="currentColor"><path d="M9 0h2v10H9zM1 0v10l7-5z" /></svg></button>
                  </Pill>
                  <Ring $size={30} aria-label="Record" />
                  <PlayButton $size={30} aria-label="Play"><svg width="12" height="12" fill="#333"><path d="M1 0l11 6-11 6z" /></svg></PlayButton>
                  <PlayButton $size={23} $dark aria-label="Repeat">
                    <svg width="13" height="13" viewBox="0 0 13 13" fill="none" stroke="currentColor" strokeWidth="1.800"><path d="M3 10a5 5 0 0 1 3-8.500M10 3a5 5 0 0 1-3 8.500M1 10.500h3V8M12 2.500H9V5" /></svg>
                  </PlayButton>
                  <Pill>
                    <button aria-label="Stop"><svg width="9" height="9" fill="currentColor"><path d="M0 0h9v9H0z" /></svg></button>
                    <button aria-label="Pause"><svg width="9" height="9" fill="currentColor"><path d="M0 0h3v9H0zM6 0h3v9H6z" /></svg></button>
                  </Pill>
                  <Clock>14</Clock>
                </Transport>
              </Dock>
              <HScroll>
                <RoundArrow aria-label="Scroll left"><svg width="5" height="5" fill="currentColor"><path d="M4 0v5L0 2.500z" /></svg></RoundArrow>
                <HThumb><i /><b /><i /></HThumb>
                <RoundArrow aria-label="Scroll right"><svg width="5" height="5" fill="currentColor"><path d="M1 0v5l4-2.500z" /></svg></RoundArrow>
              </HScroll>
            </Bottom>
          </Project>
          <Playhead>
            <svg width="15" height="8" viewBox="0 0 15 8"><path d="M.5.5h14L7.500 8z" fill="#2f7f72" stroke="#8aa" strokeWidth=".8" /></svg>
          </Playhead>
          <EnvelopeDialog />
        </Workspace>

        <Taskbar>
          <StartButton aria-label="Start">
            <svg width="17" height="17" viewBox="0 0 17 17" fill="#fff"><path d="M0 2.500l7-1V8H0zM8 1.300L17 0v8H8zM0 9h7v6.500l-7-1zM8 9h9v8l-9-1.300z" /></svg>
          </StartButton>
          <Search>
            <svg width="17" height="17" viewBox="0 0 17 17" fill="none" stroke="#ddd" strokeWidth="1.400"><circle cx="10.500" cy="6.500" r="5.500" /><path d="M6.500 10.500L1 16" /></svg>
            <input type="text" placeholder="Поиск" aria-label="Поиск" />
          </Search>
          <AppButton aria-label="Yandex">
            <svg width="24" height="24" viewBox="0 0 24 24"><circle cx="12" cy="12" r="12" fill="#fc3f1d" /><text x="12" y="18" fill="#fff" fontSize="16" fontWeight="bold" textAnchor="middle" fontFamily="Liberation Sans">Я</text></svg>
          </AppButton>
          <AppButton aria-label="Edge" $line="#bbb">
            <svg width="24" height="24" viewBox="0 0 24 24">
              <defs>
                <linearGradient id="edge" x2="1"><stop offset="0" stopColor="#2aa9e8" /><stop offset="1" stopColor="#5fd858" /></linearGradient>
              </defs>
              <circle cx="12" cy="12" r="12" fill="#1571c9" />
              <path d="M0 11Q2 0 13 0q10 1 11 10 0 6-6 6-4 0-4-2 2-2 0-4-3-4-8-2-4 1-6 3z" fill="url(#edge)" />
              <path d="M9 10q-4 7 4 11 5 1 9-3-3 6-10 6Q4 22 4 15q1-4 5-5z" fill="#0d4a94" />
              <path d="M14 14q0 2 4 2 3 0 5-2-1 4-5 5-6-1-4-5z" fill="#223038" />
            </svg>
          </AppButton>
          <AppButton aria-label="WhatsApp"><FaWhatsapp size={26} color="#2bd366" /></AppButton>
          <AppButton aria-label="FileZilla">
            <svg width="24" height="24" viewBox="0 0 24 24"><path d="M0 0h24v24H0z" fill="#b30000" /><path d="M5 3h14l-1 4H9l-1 4h5l-1 3H7l-1 6H2zM13 10h8l-1 3-5 5h5l-1 3h-9l1-3 5-5h-4z" fill="#fff" /></svg>
          </AppButton>
          <AppButton aria-label="Explorer" $line="#bbb">
            <svg width="22" height="20" viewBox="0 0 22 20"><path d="M0 1h8l2 2h12v16H0z" fill="#e8a420" /><path d="M0 5h22v14H0z" fill="#ffd766" /><path d="M4 11h14v8h-3v-4H7v4H4z" fill="#3b93d8" /></svg>
          </AppButton>
          <AppButton aria-label="Telegram">
            <svg width="21" height="21" viewBox="0 0 21 21"><circle cx="10.500" cy="10.500" r="10.500" fill="#2ba0dc" /><g transform="translate(3 4)"><FaTelegramPlane size={13} /></g></svg>
          </AppButton>
          <AppButton aria-label="PDF">
            <svg width="22" height="16" viewBox="0 0 22 16"><path d="M6 0h13q3 0 2 4l-1 11H0L2 5z" fill="#f7e600" /><text x="11" y="12" fontSize="8" fontWeight="bold" textAnchor="middle" fontFamily="Liberation Sans">PDF</text></svg>
          </AppButton>
          <AppButton aria-label="REAPER" $bg="#4f585d" $line="#bbb"><ReaperLogo size={21} /></AppButton>
          <AppButton aria-label="Discord" $bg="#aa6632" $line="#ff7b12">
            <svg width="24" height="24" viewBox="0 0 24 24"><circle cx="12" cy="12" r="12" fill="#5865f2" /><g transform="translate(4 4)"><FaDiscord size={16} /></g></svg>
            <Badge>9+</Badge>
          </AppButton>
          <Tray>
            <svg width="13" height="8" fill="none" stroke="#fff" strokeWidth="1.300"><path d="M1 7l5.500-5.500L12 7" /></svg>
            <svg width="13" height="17" viewBox="0 0 13 17" fill="none" stroke="#fff"><path d="M2.500 6V1.500h6V6M1.500 6.500h8v9h-8zM4 3.500h1M6.500 3.500h1M8 13l2 2 3-4" /></svg>
            <svg width="14" height="14" viewBox="0 0 14 14"><circle cx="7" cy="7" r="7" fill="#33231f" /><path d="M5 5H1v4h4M1 7h3M9 5H6v2h3v2H6M14 5h-4v4h3V7" stroke="#ee7c3c" strokeWidth="1.100" fill="none" /></svg>
            <svg width="14" height="14" viewBox="0 0 14 14"><path d="M1 12Q-1 4 7 1q5-1 6 1 0 6-4 9t-8 1z" fill="#fff" /><path d="M4 6q3-4 7-3-1 4-7 3z" fill="#222" /></svg>
            <svg width="14" height="14" viewBox="0 0 14 14" fill="none" stroke="#ddd"><circle cx="11" cy="12" r="1" fill="#fff" /><path d="M7 13q0-5 5-5M4 13q0-8 8-8M1 13Q1 2 12 2" /></svg>
            <svg width="17" height="14" viewBox="0 0 17 14" fill="none" stroke="#fff"><path d="M1 5h2l4-3.500v11L3 9H1zM9 5q1 2 0 4M11 3q3 4 0 8" /><path d="M13 1q4 6 0 12" stroke="#777" /></svg>
            <span>РУС</span>
            <DateTime>0:25<br />11.02.2024</DateTime>
            <svg width="17" height="17" viewBox="0 0 17 17" fill="none" stroke="#fff" strokeWidth="1.200"><path d="M1 1h15v12h-5l-2.500 2.500L6 13H1z" /></svg>
          </Tray>
        </Taskbar>
      </Screen>
    </>
  );
}
